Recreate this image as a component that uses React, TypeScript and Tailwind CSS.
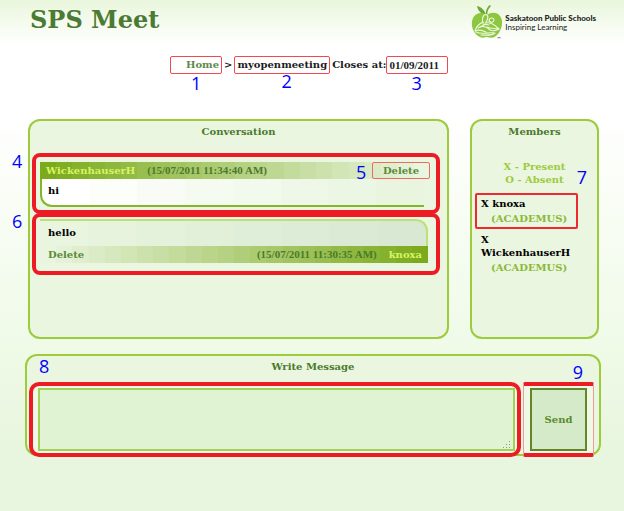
import React from "react";

const slab = "font-['DejaVu_Serif',serif] font-bold";
const dateFont = "font-['Liberation_Serif',serif] text-[11px] font-bold";

type Rgb = [number, number, number];

// Builds a left-to-right gradient made of flat, equally wide bands.
function bands(from: Rgb, to: Rgb, count: number) {
  const stops = Array.from({ length: count }, (_, i) => {
    const t = i / (count - 1);
    const c = from.map((v, k) => Math.round(v + (to[k] - v) * t)).join(",");
    return `rgb(${c}) ${(i / count) * 100}% ${((i + 1) / count) * 100}%`;
  });
  return { backgroundImage: `linear-gradient(to right, ${stops.join(",")})` };
}

const deep: Rgb = [124, 170, 28];
const pale: Rgb = [233, 245, 223];

function Num({ n, className }: { n: number; className: string }) {
  return (
    <span
      className={`absolute z-10 font-['Open_Sans',sans-serif] text-lg leading-4 font-normal text-[#0000ff] ${className}`}
    >
      {n}
    </span>
  );
}

function Logo() {
  return (
    <div className="flex items-start gap-0.5">
      <svg width="32" height="36" viewBox="0 0 32 36" aria-hidden="true">
        <path d="M15 11C14 7 11 3 6 2C7 7 10 10 15 11Z" fill="#6aab35" />
        <path d="M15 11C14.500 7 16 3 19 1L20 2C17 5 16 8 16.500 11Z" fill="#6aab35" />
        <path
          d="M16 11C12 8 5 8 2 14C-1 21 2 30 9 33C12 34.500 14 33 16 33C19 33.500 22 35 26 31C31 26 33 17 29 12C26 8 20 8 16 11Z"
          fill="#8dc63f"
        />
        <g fill="none" stroke="#effae2" strokeWidth="1.1" strokeLinecap="round" strokeLinejoin="round">
          <path d="M12 19C10.500 15 12 10.500 15 10.500C18 11 17 16 14.500 19" />
          <path d="M12 18C8 20 5 23 4 27C8 25 11 26 15 28" />
          <path d="M18 17C18 13.500 23 13 23 16C23 18.500 20 19 18 17Z" />
          <path d="M15 19C18 18 23 20 28 25C24 24 20 25 16 23" />
          <path d="M7 24C12 21 16 23 19 26C23 28 26 26 28 25" />
          <path d="M5 28C10 31 16 28 24 29C21 32 15 31 10 31" />
          <path d="M12 20L18 21M9 23L13 21" />
        </g>
        <text x="26" y="36" fontSize="4" fill="#333333">™</text>
      </svg>
      <div className="pt-2.5 font-['Lato',sans-serif] text-[8px] leading-[9px] whitespace-nowrap text-[#222]">
        <p className="font-black">Saskatoon Public Schools</p>
        <p className="font-normal">Inspiring Learning</p>
      </div>
    </div>
  );
}

const panel = "relative rounded-xl border-2 border-[#9ccb3b] bg-[#eaf6e0]";
const heading = "text-center text-[10px] leading-[18px] text-[#4a7a2c]";
const crumbBox = "relative rounded-xs border border-[#ee4a50] leading-4";

function Member({ name, className }: { name: string; className: string }) {
  return (
    <li className={`relative text-[10px] leading-[13px] text-black ${className}`}>
      <p>X {name}</p>
      <p className="pt-0.5 pl-2.5 text-[#8cb838]">(ACADEMUS)</p>
    </li>
  );
}

export default function App() {
  return (
    <div
      className={`min-h-screen bg-[linear-gradient(to_bottom,#e9f6dc_0px,#ffffff_44px,#ffffff_110px,#effae7_350px,#e9f6df_440px)] ${slab}`}
    >
      <header className="flex h-14 items-start justify-between pr-7 pl-[30px]">
        <h1 className="pt-1 text-2xl leading-8 text-[#4a7a34]">SPS Meet</h1>
        <div className="pt-1">
          <Logo />
        </div>
      </header>

      <nav className="flex justify-center pr-1.5 text-[10px] whitespace-nowrap text-[#1c1c1c]">
        <span className={`${crumbBox} pr-0.5 pl-[15px]`}>
          <a href="#home" className="text-[#5d8a4c]">Home</a>
          <Num n={1} className="top-[18px] left-5" />
        </span>
        <span className="px-0.5 leading-[18px]">&gt;</span>
        <span className={`${crumbBox} px-0.5`}>
          myopenmeeting
          <Num n={2} className="top-4 left-[46px]" />
        </span>
        <span className="pl-0.5 leading-[18px]">Closes at:</span>
        <span className={`${crumbBox} pr-2 pl-0.5 ${dateFont}`}>
          01/09/2011
          <Num n={3} className="top-[18px] left-6" />
        </span>
      </nav>

      <main className="pt-[45px]">
        <div className="flex gap-[21px] pr-[25px] pl-7">
          <section className={`${panel} h-[220px] min-w-0 flex-1 pt-0.5`}>
            <h2 className={heading}>Conversation</h2>
            <div className="pt-3 pr-[7px] pl-0.5">
              <article className="relative h-[61px] rounded-lg border-4 border-[#ed1c24] pt-[5px] pr-1.5 pl-1">
                <Num n={4} className="-top-1 -left-6" />
                <div
                  className="flex h-[17px] items-center justify-between text-[10px]"
                  style={bands(deep, pale, 24)}
                >
                  <div className="flex items-center gap-3 pl-1.5">
                    <span className="text-[#d5f566]">WickenhauserH</span>
                    <time className={`${dateFont} text-[#4a7a2c]`}>(15/07/2011 11:34:40 AM)</time>
                  </div>
                  <div className="relative">
                    <Num n={5} className="top-0.5 -left-4" />
                    <button className="h-[17px] w-[58px] rounded-xs border border-[#ee6a62] leading-[15px] text-[#5b8a3c]">
                      Delete
                    </button>
                  </div>
                </div>
                <p
                  className="mr-1.5 h-7 rounded-bl-xl border-b-2 border-l-2 border-[#86b52c] pl-1.5 text-[10px] leading-6 text-black"
                  style={bands([255, 255, 255], pale, 8)}
                >
                  hi
                </p>
              </article>
              <article className="relative -mt-px h-[62px] rounded-lg border-4 border-[#ed1c24] pt-0.5 pr-2 pl-1">
                <Num n={6} className="-top-1 -left-6" />
                <p
                  className="h-[27px] rounded-tr-xl border-t-2 border-r-2 border-[#bfe077] pl-2 text-[10px] leading-6 text-black"
                  style={bands(pale, [216, 232, 210], 8)}
                >
                  hello
                </p>
                <div
                  className="flex h-[17px] items-center justify-between pr-1.5 pl-2 text-[10px]"
                  style={bands(pale, deep, 24)}
                >
                  <button className="text-[#5b8a3c]">Delete</button>
                  <div className="flex items-center gap-3">
                    <time className={`${dateFont} text-[#4a7a2c]`}>(15/07/2011 11:30:35 AM)</time>
                    <span className="text-[#d5f566]">knoxa</span>
                  </div>
                </div>
              </article>
            </div>
          </section>

          <section className={`${panel} h-[220px] w-[129px] shrink-0 pt-0.5`}>
            <h2 className={heading}>Members</h2>
            <div className="relative pt-[19px] text-center text-[10px] leading-[13px] text-[#9ccb3b]">
              <p>X - Present</p>
              <p>O - Absent</p>
              <Num n={7} className="top-7 right-2.5" />
            </div>
            <ul className="pt-[7px] pl-[3px]">
              <Member
                name="knoxa"
                className="h-9 w-[103px] rounded-xs border-2 border-[#ee2a30] pt-0.5 pl-1"
              />
              <Member name="WickenhauserH" className="w-[103px] pt-1 pl-1.5" />
            </ul>
          </section>
        </div>

        <section className={`${panel} mt-[15px] mr-[23px] ml-[25px] h-[102px] pt-0.5`}>
          <Num n={8} className="top-0.5 left-3" />
          <Num n={9} className="top-2 right-4" />
          <h2 className={heading}>
            <label htmlFor="message">Write Message</label>
          </h2>
          <form className="flex gap-0.5 pt-1.5 pr-[5px] pl-0.5" onSubmit={(e) => e.preventDefault()}>
            <div className="relative h-[75px] min-w-0 flex-1 rounded-[10px] border-4 border-[#ed1c24] bg-[#eff9e6] py-0.5 pr-0.5 pl-[5px]">
              <textarea
                id="message"
                className="block h-[63px] w-full resize-none border-2 border-[#a3d058] bg-[#e0f4d4] p-1 text-[10px] outline-none"
              />
              <svg className="absolute right-1.5 bottom-1 text-[#8d9a86]" width="8" height="8" viewBox="0 0 8 8" fill="currentColor" aria-hidden="true">
                <path d="M6 0h1v1h-1zM6 3h1v1h-1zM3 3h1v1h-1zM6 6h1v1h-1zM3 6h1v1h-1zM0 6h1v1h-1z" />
              </svg>
            </div>
            <div className="h-[75px] w-[71px] shrink-0 rounded-xs border-x border-y-4 border-x-[#f29a96] border-y-[#ed1c24] bg-[#eff9e6] px-1.5 py-0.5">
              <button className="h-[63px] w-full border-2 border-[#64852a] bg-[#d5eac9] text-[10px] text-[#5b8a2c]">
                Send
              </button>
            </div>
          </form>
        </section>
      </main>
    </div>
  );
}
